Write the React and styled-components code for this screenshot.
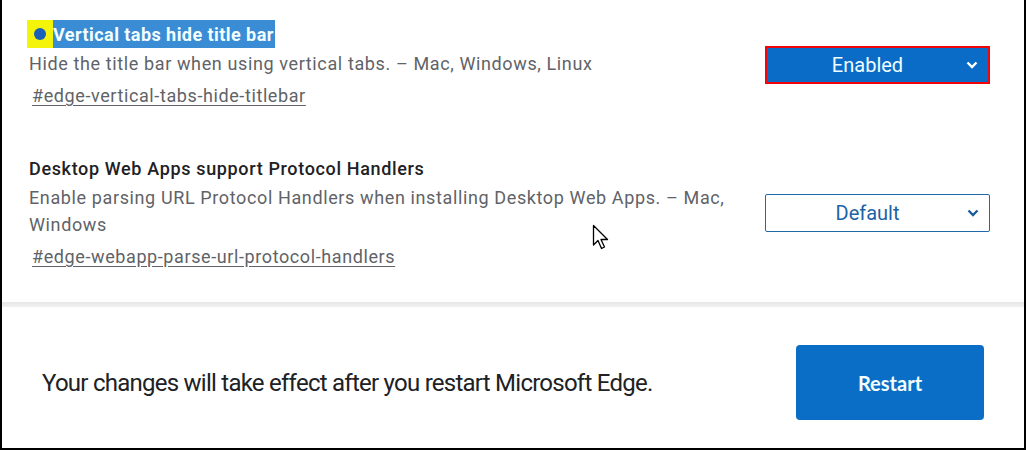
import styled, { createGlobalStyle } from 'styled-components';

const GlobalStyle = createGlobalStyle`
  html, body {
    margin: 0;
    padding: 0;
    background: #ffffff;
  }
  body {
    font-family: Roboto, 'Liberation Sans', Arial, sans-serif;
  }
`;

const Frame = styled.div`
  position: relative;
  box-sizing: border-box;
  width: 1026px;
  height: 450px;
  display: flex;
  flex-direction: column;
  background: #fff;
  border-left: 2px solid #000;
  border-right: 2px solid #000;
  border-bottom: 2px solid #000;
  overflow: hidden;
`;

const FlagList = styled.div`
  height: 302px;
  box-sizing: border-box;
  padding: 20px 34px 0 25px;
  display: flex;
  flex-direction: column;
  gap: 44px;
`;

const FlagRow = styled.div`
  display: grid;
  grid-template-columns: 1fr 225px;
  column-gap: 32px;
  align-items: center;
`;

const FlagText = styled.div`
  display: flex;
  flex-direction: column;
`;

const Title = styled.div`
  display: flex;
  align-items: center;
  height: 28px;
  padding-left: ${(p) => (p.$marked ? '0' : '2px')};
  font-size: 18px;
  font-weight: 500;
  letter-spacing: 0.65px;
  color: #202124;
`;

const Marker = styled.span`
  display: flex;
  align-items: center;
  justify-content: center;
  width: 26px;
  height: 28px;
  background: #f4f40a;
  &::after {
    content: '';
    width: 12px;
    height: 12px;
    border-radius: 50%;
    background: #1a5fb8;
  }
`;

const Selected = styled.span`
  display: flex;
  align-items: center;
  height: 28px;
  padding-right: 1px;
  background: #3a8cd4;
  color: #f4ffff;
  font-weight: 700;
  letter-spacing: 0.45px;
`;

const Description = styled.div`
  margin-top: 2px;
  padding-left: 2px;
  font-size: 18px;
  line-height: 27px;
  letter-spacing: 0.62px;
  color: #5f6368;
`;

const FlagLink = styled.a`
  align-self: flex-start;
  margin: 5px 0 0 5px;
  font-size: 18px;
  line-height: 28px;
  letter-spacing: 0.6px;
  color: #5f6368;
  text-decoration: underline;
  text-underline-offset: 3px;
`;

const Select = styled.div`
  position: relative;
  box-sizing: border-box;
  height: 38px;
  display: flex;
  align-items: center;
  justify-content: center;
  padding-right: 20px;
  font-size: 20px;
  background: ${(p) => (p.$active ? '#0b6cc8' : '#fff')};
  color: ${(p) => (p.$active ? '#f0ffff' : '#1d63a6')};
  border: ${(p) => (p.$active ? '2px solid #f2050a' : '1px solid #1e6aa8')};
  border-radius: ${(p) => (p.$active ? '0' : '2px')};
  svg {
    position: absolute;
    right: 10px;
    top: 50%;
    transform: translateY(-50%);
  }
`;

const Separator = styled.div`
  height: 5px;
  background: linear-gradient(#e6e6e6, #f1f1f1);
`;

const Footer = styled.div`
  flex: 1;
  display: flex;
  align-items: center;
  justify-content: space-between;
  padding: 10px 40px 0 40px;
`;

const Notice = styled.div`
  font-size: 24px;
  color: #202124;
  letter-spacing: -0.75px;
`;

const RestartButton = styled.button`
  width: 188px;
  height: 75px;
  border: none;
  border-radius: 4px;
  background: #0b6ec6;
  color: #f2ffff;
  font-family: Lato, Roboto, sans-serif;
  font-size: 20px;
  font-weight: 700;
`;

const Cursor = styled.svg`
  position: absolute;
  left: 590px;
  top: 224px;
`;

const Chevron = ({ color }) => (
  <svg width="12" height="8" viewBox="0 0 12 8">
    <path d="M1.5 1.5 L6 6 L10.5 1.5" fill="none" stroke={color} strokeWidth="2.4" />
  </svg>
);

const flags = [
  {
    id: 'vt',
    title: 'Vertical tabs hide title bar',
    marked: true,
    desc: 'Hide the title bar when using vertical tabs. – Mac, Windows, Linux',
    link: '#edge-vertical-tabs-hide-titlebar',
    value: 'Enabled',
  },
  {
    id: 'wa',
    title: 'Desktop Web Apps support Protocol Handlers',
    desc: 'Enable parsing URL Protocol Handlers when installing Desktop Web Apps. – Mac, Windows',
    link: '#edge-webapp-parse-url-protocol-handlers',
    value: 'Default',
  },
];

export default function App() {
  return (
    <>
      <GlobalStyle />
      <Frame>
        <FlagList>
          {flags.map((f) => (
            <FlagRow key={f.id}>
              <FlagText>
                <Title $marked={f.marked}>
                  {f.marked ? (
                    <>
                      <Marker />
                      <Selected>{f.title}</Selected>
                    </>
                  ) : (
                    f.title
                  )}
                </Title>
                <Description>{f.desc}</Description>
                <FlagLink href={f.link}>{f.link}</FlagLink>
              </FlagText>
              <Select $active={f.marked}>
                {f.value}
                <Chevron color={f.marked ? '#ffffff' : '#1d5c9a'} />
              </Select>
            </FlagRow>
          ))}
        </FlagList>
        <Separator />
        <Footer>
          <Notice>Your changes will take effect after you restart Microsoft Edge.</Notice>
          <RestartButton>Restart</RestartButton>
        </Footer>
        <Cursor width="20" height="28" viewBox="0 0 20 28">
          <path
            d="M1.5 1.5 L1.5 21 L6 16.5 L9.5 24.5 L12.5 23 L9 15.5 L15.5 15.5 Z"
            fill="#fff"
            stroke="#000"
            strokeWidth="1.3"
            strokeLinejoin="round"
          />
        </Cursor>
      </Frame>
    </>
  );
}
